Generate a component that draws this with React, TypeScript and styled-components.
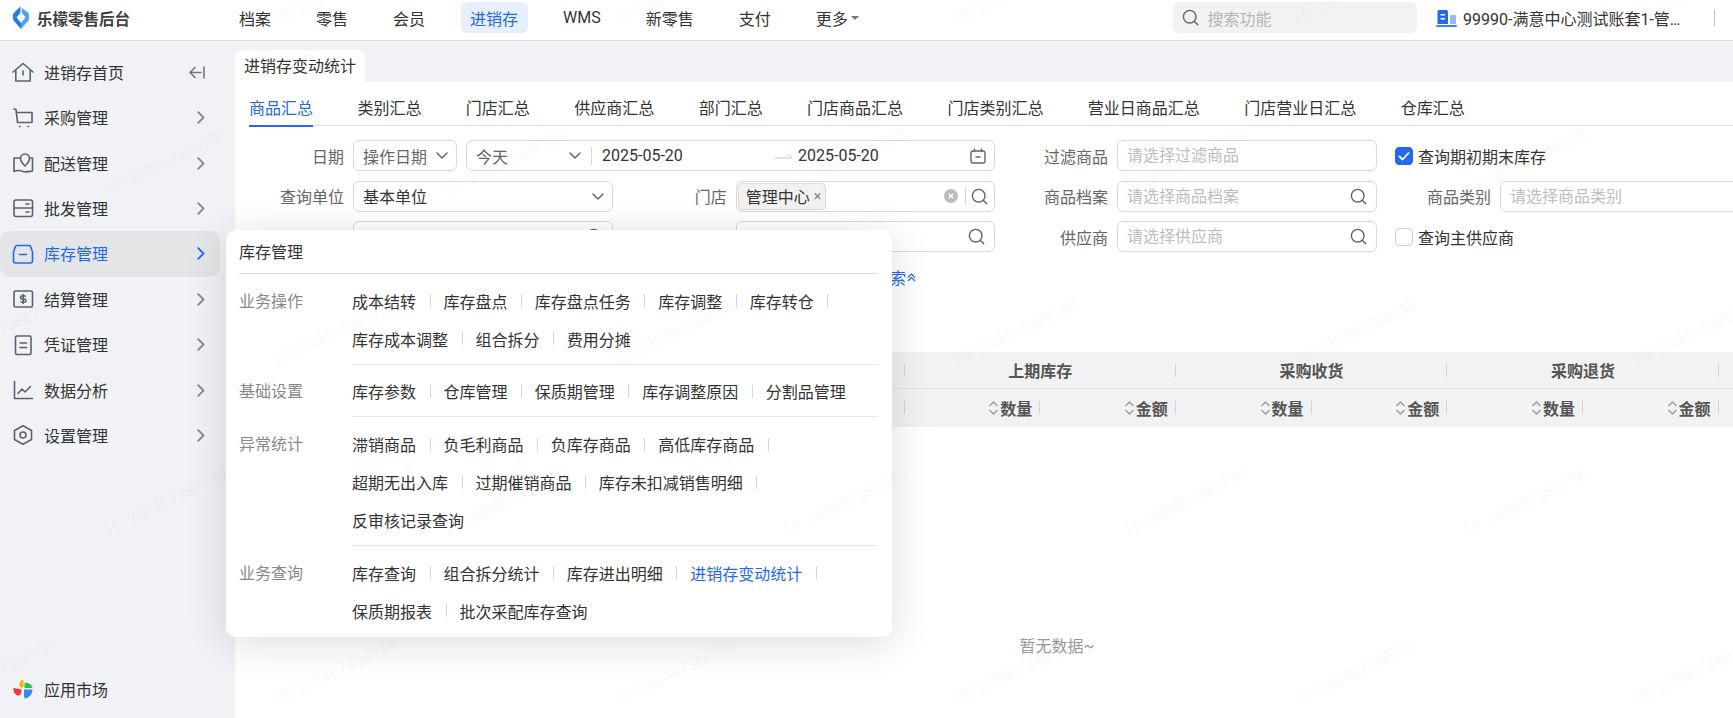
import React from "react";
import styled, { createGlobalStyle } from "styled-components";
import { Search } from "lucide-react";

const Global = createGlobalStyle`
  html, body { margin: 0; padding: 0; height: 100%; overflow: hidden; background: #fff; }
  body { font-family: Roboto, "Noto Sans CJK SC", sans-serif; font-size: 16px; color: #333; }
  * { box-sizing: border-box; }
`;

const BLUE = "#2468f2";

const Page = styled.div`
  position: relative;
  display: flex;
  flex-direction: column;
  width: 1733px;
  height: 718px;
  overflow: hidden;
`;

/* ---------- top bar ---------- */
const Header = styled.header`
  flex: 0 0 40px;
  display: flex;
  align-items: center;
  padding: 2px 18px 7px 0;
  background: #fff;
  border-bottom: 1px solid #dcdddf;
`;
const Brand = styled.div`
  flex: 0 0 229.5px;
  display: flex;
  align-items: center;
  gap: 8px;
  padding-left: 13px;
  font-size: 15.5px;
  font-weight: 700;
  color: #3c3f46;
`;
const Nav = styled.nav`
  display: flex;
  align-items: center;
  gap: 26px;
`;
const NavItem = styled.div<{ $active?: boolean }>`
  display: flex;
  align-items: center;
  gap: 3px;
  height: 31px;
  padding: 0 9.5px;
  border-radius: 6px;
  color: ${(p) => (p.$active ? BLUE : "#333")};
  background: ${(p) => (p.$active ? "#e8effc" : "transparent")};
`;
const Caret = styled.span`
  width: 0;
  height: 0;
  border-left: 4px solid transparent;
  border-right: 4px solid transparent;
  border-top: 4px solid #777;
`;
const HeaderRight = styled.div`
  margin-left: auto;
  display: flex;
  align-items: center;
`;
const SearchBox = styled.div`
  width: 244.5px;
  height: 31px;
  display: flex;
  align-items: center;
  gap: 8px;
  padding-left: 8px;
  border-radius: 6px;
  background: #f1f2f4;
  color: #b5b5b5;
  margin-right: 19px;
`;
const Account = styled.div`
  display: flex;
  align-items: center;
  gap: 6px;
`;
const AccountName = styled.span`
  width: 218px;
  overflow: hidden;
  white-space: nowrap;
  text-overflow: ellipsis;
`;
const HeaderDivider = styled.span`
  width: 1px;
  height: 16px;
  margin-left: 33px;
  background: #c4c4c4;
`;

/* ---------- body ---------- */
const Body = styled.div`
  flex: 1;
  display: flex;
  min-height: 0;
`;
const Sidebar = styled.aside`
  flex: 0 0 235px;
  display: flex;
  flex-direction: column;
  padding: 8.6px 0 6px;
  background: #f1f2f5;
`;
const MenuRow = styled.div<{ $active?: boolean }>`
  flex: 0 0 45.4px;
  width: 220px;
  display: flex;
  align-items: center;
  padding: 0 15px 0 12px;
  gap: 10px;
  border-radius: 10px;
  color: ${(p) => (p.$active ? BLUE : "#333")};
  background: ${(p) => (p.$active ? "#e4e5e7" : "transparent")};
`;
const MenuText = styled.span`
  flex: 1;
  padding-bottom: 1px;
`;
const MarketRow = styled(MenuRow)`
  margin-top: auto;
`;
const Main = styled.main`
  flex: 1;
  min-width: 0;
  display: flex;
  flex-direction: column;
  background: #f1f2f5;
`;
const TabStrip = styled.div`
  flex: 0 0 41px;
  display: flex;
  align-items: flex-end;
`;
const PageTab = styled.div`
  height: 32px;
  padding: 0 9px 2px;
  display: flex;
  align-items: center;
  background: #fff;
  border-radius: 6px 6px 0 0;
`;
const Content = styled.div`
  flex: 1;
  background: #fff;
  min-height: 0;
`;
const SubTabs = styled.div`
  height: 44px;
  margin-left: 14px;
  display: flex;
  gap: 44.4px;
  border-bottom: 1px solid #dedfe1;
`;
const SubTab = styled.div<{ $active?: boolean }>`
  height: 45px;
  padding-top: 15px;
  line-height: 24px;
  white-space: nowrap;
  color: ${(p) => (p.$active ? BLUE : "#333")};
  border-bottom: 2.5px solid ${(p) => (p.$active ? BLUE : "transparent")};
`;

/* ---------- filters ---------- */
const FilterGrid = styled.div`
  margin-top: 14px;
  display: grid;
  grid-template-columns: 118px 260px 122.7px 259.3px 122px 260px 356px;
  grid-auto-rows: 31px;
  row-gap: 9.5px;
`;
const Label = styled.div`
  display: flex;
  align-items: center;
  justify-content: flex-end;
  padding-right: 9px;
  color: #666;
  white-space: nowrap;
`;
const Control = styled.div`
  height: 100%;
  display: flex;
  align-items: center;
  min-width: 0;
  padding: 0 8px 0 9px;
  background: #fff;
  border: 1px solid #d9d9d9;
  border-radius: 6px;
`;
const StoreControl = styled(Control)`
  padding-right: 5px;
`;
const SelectValue = styled.span`
  flex: 1;
  white-space: nowrap;
`;
const MutedValue = styled(SelectValue)`
  color: #666;
`;
const PlainInput = styled.input`
  flex: 1;
  min-width: 0;
  width: 100%;
  border: 0;
  outline: 0;
  padding: 0;
  font: inherit;
  background: transparent;
  &::placeholder {
    color: #bdbdbd;
    opacity: 1;
  }
`;
const DateGroup = styled.div`
  grid-column: 2 / 5;
  display: flex;
  gap: 9px;
`;
const OpSelect = styled(Control)`
  flex: 0 0 104px;
`;
const DateRange = styled(Control)`
  flex: 1;
`;
const QuickRange = styled.div`
  flex: 0 0 116px;
  display: flex;
  align-items: center;
  padding-right: 10px;
  color: #666;
  border-right: 1px solid #d9d9d9;
  height: 18px;
`;
const DateText = styled.span<{ $w?: number }>`
  flex: ${(p) => (p.$w ? `0 0 ${p.$w}px` : "1")};
`;
const FirstDate = styled(DateText)`
  margin-left: 10px;
`;
const ArrowGlyph = styled.svg`
  flex: 0 0 18px;
  margin-right: 5px;
`;
const Tag = styled.span`
  display: inline-flex;
  align-items: center;
  gap: 4px;
  height: 27px;
  padding: 0 4px 0 7px;
  margin-left: -8px;
  background: #f2f2f3;
  border: 1px solid #dddddd;
  border-radius: 4px;
  color: #333;
`;
const TagClose = styled.span`
  color: #888;
  font-size: 14px;
  line-height: 1;
`;
const Grow = styled.span`
  flex: 1;
`;
const IconDivider = styled.span`
  width: 1px;
  height: 18px;
  background: #d9d9d9;
  margin: 0 4px 0 7px;
`;
const CheckCell = styled.label`
  display: flex;
  align-items: center;
  gap: 5px;
  padding-left: 18px;
`;
const CheckBox = styled.span<{ $on?: boolean }>`
  width: 18px;
  height: 18px;
  display: flex;
  align-items: center;
  justify-content: center;
  border-radius: 4px;
  background: ${(p) => (p.$on ? BLUE : "#fff")};
  border: 1px solid ${(p) => (p.$on ? BLUE : "#d0d0d0")};
`;
const SplitCell = styled.div`
  display: flex;
  height: 100%;
`;
const SideLabel = styled(Label)`
  flex: 0 0 123px;
`;
const SideControl = styled(Control)`
  flex: 0 0 260px;
`;
const ToggleRow = styled.div`
  margin: 15px 0 0 607px;
  display: flex;
  align-items: center;
  gap: 1px;
  height: 20px;
  color: ${BLUE};
`;

/* ---------- table ---------- */
const TableHead = styled.div`
  margin-top: 64.7px;
  background: #f1f2f4;
  color: #555;
  font-weight: 600;
`;
const HeadRow = styled.div<{ $bottom?: boolean; $cols: string }>`
  display: grid;
  grid-template-columns: ${(p) => p.$cols};
  height: 37.5px;
  border-bottom: ${(p) => (p.$bottom ? "none" : "1px solid #e4e5e7")};
`;
const HeadCell = styled.div<{ $right?: boolean; $last?: boolean }>`
  position: relative;
  display: flex;
  align-items: center;
  justify-content: ${(p) => (p.$right ? "flex-end" : "center")};
  gap: 2px;
  padding-right: ${(p) => (p.$right ? "8px" : "0")};
  &::after {
    content: "";
    display: ${(p) => (p.$last ? "none" : "block")};
    position: absolute;
    right: 0;
    top: 12px;
    width: 1px;
    height: 13px;
    background: #d3d4d6;
  }
`;
const EmptyText = styled.div`
  padding: 208px 0 0 146px;
  text-align: center;
  color: #999;
  line-height: 24px;
`;

/* ---------- flyout ---------- */
const Flyout = styled.div`
  position: absolute;
  left: 226px;
  top: 230px;
  width: 666px;
  padding: 0 14px 1.5px 13px;
  background: #fff;
  border-radius: 10px;
  box-shadow: 0 6px 40px rgba(0, 0, 0, 0.14);
  z-index: 5;
`;
const FlyoutTitle = styled.div`
  height: 44px;
  padding-top: 11px;
  line-height: 24px;
  border-bottom: 1px solid #dcdcdc;
`;
const Section = styled.section`
  display: flex;
`;
const SectionName = styled.div`
  flex: 0 0 113px;
  padding-top: 15.5px;
  line-height: 24px;
  color: #888;
`;
const SectionLinks = styled.div<{ $last?: boolean }>`
  flex: 1;
  display: flex;
  flex-wrap: wrap;
  row-gap: 14px;
  padding: 14.7px 0 13px;
  border-bottom: ${(p) => (p.$last ? "none" : "1px solid #e6e6e6")};
`;
const LinkItem = styled.div<{ $active?: boolean }>`
  display: flex;
  align-items: center;
  height: 24px;
  white-space: nowrap;
  color: ${(p) => (p.$active ? BLUE : "#333")};
  &::after {
    content: "";
    width: 1px;
    height: 13px;
    margin: 0 12.9px 0 13.5px;
    background: #d5d5d5;
  }
  &:last-child::after {
    display: none;
  }
`;

/* ---------- watermark ---------- */
const WatermarkLayer = styled.div`
  position: absolute;
  inset: 0;
  overflow: hidden;
  pointer-events: none;
  z-index: 10;
`;
const Mark = styled.span`
  position: absolute;
  transform: translate(-50%, -50%) rotate(-25.6deg);
  font-size: 16px;
  line-height: 20px;
  white-space: nowrap;
  color: rgba(0, 0, 0, 0.035);
`;

/* ---------- drawings ---------- */
const Glyph = styled.svg<{ $blue?: boolean }>`
  flex: 0 0 22px;
  fill: none;
  stroke: ${(p) => (p.$blue ? BLUE : "#5e616b")};
  stroke-width: 1.6;
  stroke-linecap: round;
  stroke-linejoin: round;
`;
const MarketGlyph = styled.svg`
  flex: 0 0 22px;
`;

const MenuIcon: React.FC<{ name: string; blue?: boolean }> = ({ name, blue }) => (
  <Glyph width="22" height="22" viewBox="0 0 22 22" $blue={blue}>
    {name === "home" && (
      <>
        <path d="M1 11 L11 2.5 L21 11" />
        <path d="M3.8 9.5 V20 H18.2 V9.5" />
        <path d="M11 10 V14" />
      </>
    )}
    {name === "cart" && (
      <>
        <path d="M2 2 L4 2.5 L5.5 15.5 H19" />
        <path d="M4.6 5.5 H20 V15.5" />
        <path d="M7.5 19.5 H8" />
        <path d="M16 19.5 H16.5" />
      </>
    )}
    {name === "map" && (
      <>
        <path d="M8 6 H2 V19.5 C6 18 8 18 11 19.5 C14 20.5 17 19.5 20.5 19 V6 H18" />
        <path d="M13 14 C10 11 8.5 8.5 8.5 6.5 A4.5 4.5 0 0 1 17.5 6.5 C17.5 8.5 16 11 13 14 Z" />
      </>
    )}
    {name === "server" && (
      <>
        <rect x="2" y="3" width="18.5" height="16.5" rx="2" />
        <path d="M2 11 H20.5" />
        <path d="M14 7 H17" />
        <path d="M14 15 H17" />
      </>
    )}
    {name === "box" && (
      <>
        <path d="M5 2.5 H17 C18 2.5 18.5 3 18.8 4 L20.5 9 V18 A2 2 0 0 1 18.5 20 H3.5 A2 2 0 0 1 1.5 18 V9 L3.2 4 C3.5 3 4 2.5 5 2.5 Z" />
        <path d="M7.5 11.5 H14.5" />
      </>
    )}
    {name === "money" && (
      <>
        <rect x="2" y="3" width="18.5" height="16" rx="1.5" />
        <path d="M13.5 8 H10 A1.5 1.5 0 0 0 10 11 H12.5 A1.5 1.5 0 0 1 12.5 14 H9" />
        <path d="M11.2 6.5 V15.5" />
      </>
    )}
    {name === "doc" && (
      <>
        <rect x="3.5" y="2" width="15.5" height="18.5" rx="1.5" />
        <path d="M8 9 H14.5" />
        <path d="M8 13.5 H14.5" />
      </>
    )}
    {name === "chart" && (
      <>
        <path d="M2.5 2.5 V19.5 H20.5" />
        <path d="M6 14.5 L10 10 L13 13 L18.5 7.5" />
      </>
    )}
    {name === "hex" && (
      <>
        <path d="M11 1.8 L19.5 6.5 V15.5 L11 20.2 L2.5 15.5 V6.5 Z" />
        <circle cx="11" cy="11" r="3" />
      </>
    )}
  </Glyph>
);

const Chevron: React.FC<{ blue?: boolean }> = ({ blue }) => (
  <svg width="8" height="13" viewBox="0 0 8 13" fill="none" stroke={blue ? BLUE : "#888"} strokeWidth="1.8" strokeLinecap="round" strokeLinejoin="round">
    <path d="M1.2 1.2 L6.5 6.5 L1.2 11.8" />
  </svg>
);
const CollapseIcon = () => (
  <svg width="16" height="13" viewBox="0 0 16 13" fill="none" stroke="#777" strokeWidth="1.6" strokeLinecap="round" strokeLinejoin="round">
    <path d="M12 6.5 H1 M6 1.5 L1 6.5 L6 11.5" />
    <path d="M15 1 V12" />
  </svg>
);
const DownIcon = () => (
  <svg width="12" height="7" viewBox="0 0 12 7" fill="none" stroke="#666" strokeWidth="1.5" strokeLinecap="round" strokeLinejoin="round">
    <path d="M1 1 L6 6 L11 1" />
  </svg>
);
const CalendarIcon = () => (
  <svg width="16" height="16" viewBox="0 0 16 16" fill="none" stroke="#666" strokeWidth="1.4" strokeLinecap="round">
    <rect x="1" y="3" width="14" height="12" rx="2" />
    <path d="M4.5 1 V3.5 M11.5 1 V3.5 M6 9 H10" />
  </svg>
);
const ClearIcon = () => (
  <svg width="14" height="14" viewBox="0 0 14 14">
    <circle cx="7" cy="7" r="7" fill="#bcbcbc" />
    <path d="M4.8 4.8 L9.2 9.2 M9.2 4.8 L4.8 9.2" stroke="#fff" strokeWidth="1.4" />
  </svg>
);
const SortIcon = () => (
  <svg width="9" height="16" viewBox="0 0 9 16" fill="none" stroke="#999" strokeWidth="1.4" strokeLinecap="round" strokeLinejoin="round">
    <path d="M1 5.5 L4.5 2 L8 5.5" />
    <path d="M1 10.5 L4.5 14 L8 10.5" />
  </svg>
);
const Logo = () => (
  <svg width="16" height="23" viewBox="0 0 16 23">
    <path d="M7.5 0.5 L1 6.8 Q0 7.8 0 9.2 V12.5 Q0 14 1 15 L8 23 V17 L3.6 11.5 L7.5 6.5 Z" fill="#2277f3" />
    <path d="M9 2 L15 6.8 Q16 7.8 16 9.2 V12.5 Q16 14 15 15 L8 23 V17 L12.4 11.5 L9 7 Z" fill="#4fa0fb" />
  </svg>
);
const BuildingIcon = () => (
  <svg width="21" height="18" viewBox="0 0 21 18">
    <path d="M1.5 2.5 Q1.5 1 3 1 H10.5 Q12 1 12 2.5 V15 H1.5 Z" fill="#2468f2" />
    <rect x="14" y="6" width="6" height="9" rx="1" fill="#93b8f8" />
    <rect x="4.5" y="5" width="4.5" height="1.5" fill="#fff" />
    <rect x="4.5" y="9" width="4.5" height="1.5" fill="#fff" />
    <rect x="0" y="16" width="21" height="2" rx="1" fill="#3d83f7" />
  </svg>
);
const MarketIcon = () => (
  <MarketGlyph width="22" height="22" viewBox="0 0 22 22">
    <path d="M10 9.5 C6 9.5 6.5 3 11 1.5 L11.5 1.5 V8 C11.5 9 11 9.5 10 9.5 Z" fill="#f7b500" />
    <path d="M12.5 10 V5 C16 4.5 20 6 20.5 10 Z" fill="#27c93f" />
    <path d="M12 11.5 H20.5 C20.5 16 17 20 13 20.5 C11.5 19 12 15 12 11.5 Z" fill="#2f8cf6" />
    <path d="M1.5 10 L9.5 11.5 C10 15 8 18 6 17.5 C3 17 1 13.5 1.5 10 Z" fill="#f5333f" />
  </MarketGlyph>
);

/* ---------- data ---------- */
const menus = [
  ["cart", "采购管理"],
  ["map", "配送管理"],
  ["server", "批发管理"],
  ["box", "库存管理"],
  ["money", "结算管理"],
  ["doc", "凭证管理"],
  ["chart", "数据分析"],
  ["hex", "设置管理"],
];
const subTabs = ["商品汇总", "类别汇总", "门店汇总", "供应商汇总", "部门汇总", "门店商品汇总", "门店类别汇总", "营业日商品汇总", "门店营业日汇总", "仓库汇总"];
const sections = [
  { name: "业务操作", links: ["成本结转", "库存盘点", "库存盘点任务", "库存调整", "库存转仓", "库存成本调整", "组合拆分", "费用分摊"] },
  { name: "基础设置", links: ["库存参数", "仓库管理", "保质期管理", "库存调整原因", "分割品管理"] },
  { name: "异常统计", links: ["滞销商品", "负毛利商品", "负库存商品", "高低库存商品", "超期无出入库", "过期催销商品", "库存未扣减销售明细", "反审核记录查询"] },
  { name: "业务查询", links: ["库存查询", "组合拆分统计", "库存进出明细", "进销存变动统计", "保质期报表", "批次采配库存查询"] },
];
const marks: { x: number; y: number }[] = [];
for (let j = -1; j < 3; j++) {
  for (let i = -1; i < 6; i++) {
    marks.push({ x: 165 + 340 * i, y: 163 + 340 * j });
    marks.push({ x: 335 + 340 * i, y: 333 + 340 * j });
  }
}
const topCols = "669.5px repeat(3, 271.4px) 1fr";
const bottomCols = "669.5px repeat(6, 135.7px) 1fr";

const SearchGlyph: React.FC<{ size?: number }> = ({ size = 19 }) => <Search size={size} color="#666" strokeWidth={1.8} />;

export default function App() {
  return (
    <Page>
      <Global />
      <Header>
        <Brand>
          <Logo />
          乐檬零售后台
        </Brand>
        <Nav>
          <NavItem>档案</NavItem>
          <NavItem>零售</NavItem>
          <NavItem>会员</NavItem>
          <NavItem $active>进销存</NavItem>
          <NavItem>WMS</NavItem>
          <NavItem>新零售</NavItem>
          <NavItem>支付</NavItem>
          <NavItem>
            更多
            <Caret />
          </NavItem>
        </Nav>
        <HeaderRight>
          <SearchBox>
            <Search size={19} color="#666" strokeWidth={1.8} />
            搜索功能
          </SearchBox>
          <Account>
            <BuildingIcon />
            <AccountName>99990-满意中心测试账套1-管理中心总部门店</AccountName>
          </Account>
          <HeaderDivider />
        </HeaderRight>
      </Header>
      <Body>
        <Sidebar>
          <MenuRow>
            <MenuIcon name="home" />
            <MenuText>进销存首页</MenuText>
            <CollapseIcon />
          </MenuRow>
          {menus.map(([icon, text]) => {
            const active = text === "库存管理";
            return (
              <MenuRow key={text} $active={active}>
                <MenuIcon name={icon} blue={active} />
                <MenuText>{text}</MenuText>
                <Chevron blue={active} />
              </MenuRow>
            );
          })}
          <MarketRow>
            <MarketIcon />
            <MenuText>应用市场</MenuText>
          </MarketRow>
        </Sidebar>
        <Main>
          <TabStrip>
            <PageTab>进销存变动统计</PageTab>
          </TabStrip>
          <Content>
            <SubTabs>
              {subTabs.map((t, i) => (
                <SubTab key={t} $active={i === 0}>
                  {t}
                </SubTab>
              ))}
            </SubTabs>
            <FilterGrid>
              <Label>日期</Label>
              <DateGroup>
                <OpSelect>
                  <MutedValue>操作日期</MutedValue>
                  <DownIcon />
                </OpSelect>
                <DateRange>
                  <QuickRange>
                    <MutedValue>今天</MutedValue>
                    <DownIcon />
                  </QuickRange>
                  <FirstDate $w={173}>2025-05-20</FirstDate>
                  <ArrowGlyph width="18" height="8" viewBox="0 0 18 8" fill="none" stroke="#c8c8c8" strokeWidth="1">
                    <path d="M0 6 H17 L13 2" />
                  </ArrowGlyph>
                  <DateText>2025-05-20</DateText>
                  <CalendarIcon />
                </DateRange>
              </DateGroup>
              <Label>过滤商品</Label>
              <Control>
                <PlainInput placeholder="请选择过滤商品" />
              </Control>
              <CheckCell>
                <CheckBox $on>
                  <svg width="12" height="10" viewBox="0 0 12 10" fill="none" stroke="#fff" strokeWidth="1.8">
                    <path d="M1 5 L4.5 8.5 L11 1.5" />
                  </svg>
                </CheckBox>
                查询期初期末库存
              </CheckCell>

              <Label>查询单位</Label>
              <Control>
                <SelectValue>基本单位</SelectValue>
                <DownIcon />
              </Control>
              <Label>门店</Label>
              <StoreControl>
                <Tag>
                  管理中心
                  <TagClose>×</TagClose>
                </Tag>
                <Grow />
                <ClearIcon />
                <IconDivider />
                <SearchGlyph />
              </StoreControl>
              <Label>商品档案</Label>
              <Control>
                <PlainInput placeholder="请选择商品档案" />
                <SearchGlyph />
              </Control>
              <SplitCell>
                <SideLabel>商品类别</SideLabel>
                <SideControl>
                  <PlainInput placeholder="请选择商品类别" />
                </SideControl>
              </SplitCell>

              <Label>查询方式</Label>
              <Control>
                <Grow />
                <SearchGlyph />
              </Control>
              <Label />
              <Control>
                <Grow />
                <SearchGlyph />
              </Control>
              <Label>供应商</Label>
              <Control>
                <PlainInput placeholder="请选择供应商" />
                <SearchGlyph />
              </Control>
              <CheckCell>
                <CheckBox />
                查询主供应商
              </CheckCell>
            </FilterGrid>
            <ToggleRow>
              收起搜索
              <svg width="9" height="9" viewBox="0 0 9 9" fill="none" stroke={BLUE} strokeWidth="1.2">
                <path d="M1 4.5 L4.5 1 L8 4.5 M1 8 L4.5 4.5 L8 8" />
              </svg>
            </ToggleRow>
            <TableHead>
              <HeadRow $cols={topCols}>
                <HeadCell />
                <HeadCell>上期库存</HeadCell>
                <HeadCell>采购收货</HeadCell>
                <HeadCell>采购退货</HeadCell>
                <HeadCell $last />
              </HeadRow>
              <HeadRow $bottom $cols={bottomCols}>
                <HeadCell />
                {["数量", "金额", "数量", "金额", "数量", "金额"].map((t, i) => (
                  <HeadCell key={i} $right>
                    <SortIcon />
                    {t}
                  </HeadCell>
                ))}
                <HeadCell $last />
              </HeadRow>
            </TableHead>
            <EmptyText>暂无数据~</EmptyText>
          </Content>
        </Main>
      </Body>
      <Flyout>
        <FlyoutTitle>库存管理</FlyoutTitle>
        {sections.map((s, i) => (
          <Section key={s.name}>
            <SectionName>{s.name}</SectionName>
            <SectionLinks $last={i === sections.length - 1}>
              {s.links.map((l) => (
                <LinkItem key={l} $active={l === "进销存变动统计"}>
                  {l}
                </LinkItem>
              ))}
            </SectionLinks>
          </Section>
        ))}
      </Flyout>
      <WatermarkLayer>
        {marks.map((m) => (
          <Mark key={`${m.x}-${m.y}`} style={{ left: m.x, top: m.y }}>
            157280467386738
          </Mark>
        ))}
      </WatermarkLayer>
    </Page>
  );
}
